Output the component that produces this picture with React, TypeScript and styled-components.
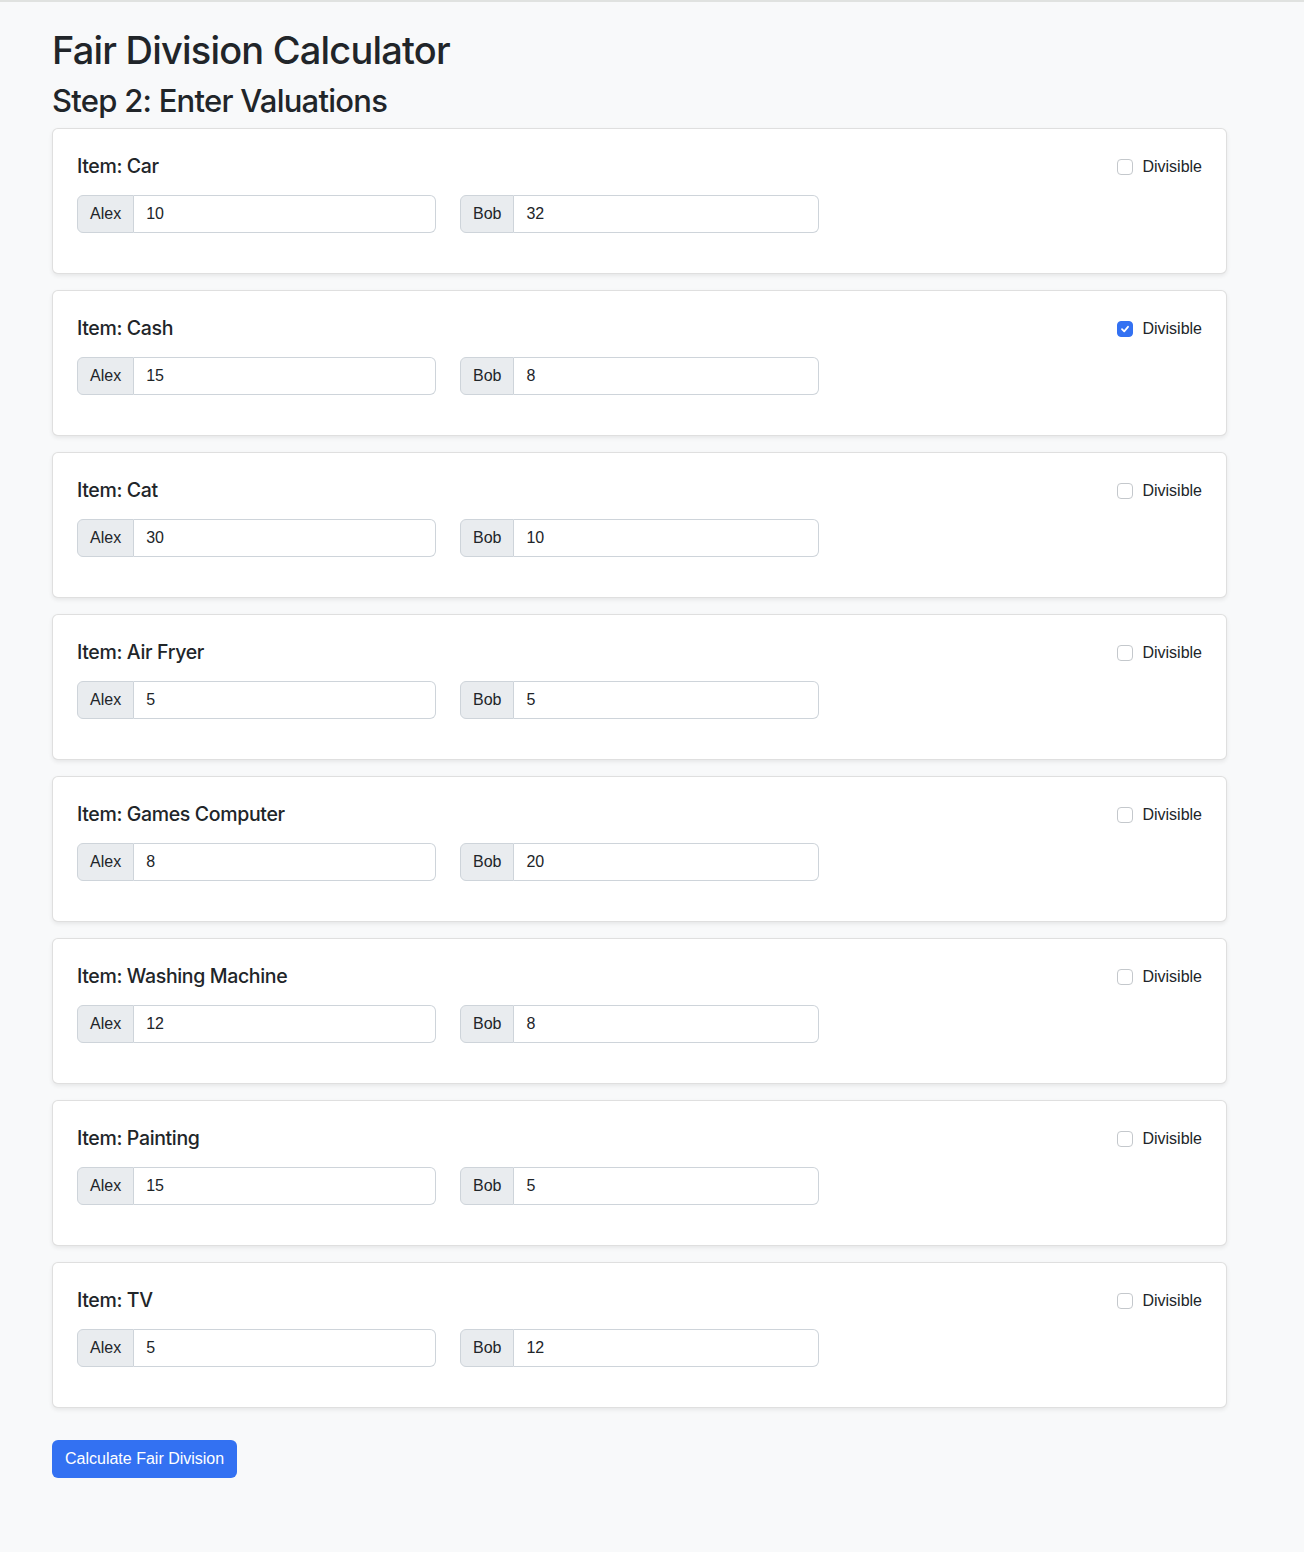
import * as React from 'react';
import { useState } from 'react';
import styled, { createGlobalStyle } from 'styled-components';

const GlobalStyle = createGlobalStyle`
  * { box-sizing: border-box; }
  body {
    margin: 0;
    background: #f8f9fa;
    color: #212529;
    font-family: "Liberation Sans", Arial, sans-serif;
    font-size: 16px;
    line-height: 1.5;
  }
`;

const headingFont = `Inter, "Liberation Sans", Arial, sans-serif`;

const Page = styled.div`
  border-top: 2px solid #e0e2e0;
  min-height: 1552px;
  padding: 26px 77px 60px 52px;
`;

const Title = styled.h1`
  font-family: ${headingFont};
  font-size: 38px;
  font-weight: 500;
  line-height: 1.2;
  letter-spacing: -0.8px;
  margin: 0 0 8px;
`;

const Subtitle = styled.h2`
  font-family: ${headingFont};
  font-size: 31px;
  font-weight: 500;
  line-height: 1.2;
  letter-spacing: -0.75px;
  margin: 0 0 9px;
`;

const Card = styled.div`
  background: #fff;
  border: 1px solid rgba(0, 0, 0, 0.125);
  border-radius: 6px;
  box-shadow: 0 2px 4px rgba(0, 0, 0, 0.075);
  padding: 26px 24px 24px;
  margin-bottom: 16px;
`;

const CardHeader = styled.div`
  display: flex;
  justify-content: space-between;
  align-items: center;
  margin-bottom: 16px;
`;

const ItemTitle = styled.h5`
  font-family: ${headingFont};
  font-size: 19.5px;
  font-weight: 500;
  line-height: 1.2;
  letter-spacing: -0.35px;
  margin: 0;
`;

const CheckLabel = styled.label`
  display: flex;
  align-items: center;
  gap: 9px;
  font-size: 16px;
  line-height: 24px;
  cursor: pointer;
`;

const CheckBox = styled.span<{ $checked: boolean }>`
  width: 16px;
  height: 16px;
  border-radius: 4px;
  border: 1px solid ${(p) => (p.$checked ? '#3371f2' : '#c4c8cc')};
  background: ${(p) => (p.$checked ? '#3371f2' : '#fff')};
  display: flex;
  align-items: center;
  justify-content: center;
`;

const Row = styled.div`
  display: grid;
  grid-template-columns: repeat(3, 1fr);
  column-gap: 24px;
  margin-bottom: 16px;
`;

const InputGroup = styled.div`
  display: flex;
  height: 38px;
`;

const Addon = styled.span`
  display: flex;
  align-items: center;
  padding: 0 12px;
  background: #e9ecef;
  border: 1px solid #ced4da;
  border-radius: 6px 0 0 6px;
  font-size: 16px;
  color: #212529;
`;

const Input = styled.input`
  flex: 1;
  min-width: 0;
  border: 1px solid #ced4da;
  border-left: none;
  border-radius: 0 6px 6px 0;
  padding: 0 12px;
  font-family: inherit;
  font-size: 16px;
  color: #212529;
  background: #fff;
  outline: none;
`;

const Button = styled.button`
  margin-top: 16px;
  background: #3371f2;
  color: #fff;
  border: none;
  border-radius: 6px;
  height: 38px;
  padding: 0 13px;
  font-family: inherit;
  font-size: 16px;
  cursor: pointer;
`;

const items = [
  { name: 'Car', alex: '10', bob: '32', divisible: false },
  { name: 'Cash', alex: '15', bob: '8', divisible: true },
  { name: 'Cat', alex: '30', bob: '10', divisible: false },
  { name: 'Air Fryer', alex: '5', bob: '5', divisible: false },
  { name: 'Games Computer', alex: '8', bob: '20', divisible: false },
  { name: 'Washing Machine', alex: '12', bob: '8', divisible: false },
  { name: 'Painting', alex: '15', bob: '5', divisible: false },
  { name: 'TV', alex: '5', bob: '12', divisible: false },
];

function ItemCard({ item }: { item: (typeof items)[number] }) {
  const [checked, setChecked] = useState(item.divisible);
  return (
    <Card>
      <CardHeader>
        <ItemTitle>Item: {item.name}</ItemTitle>
        <CheckLabel onClick={() => setChecked((c) => !c)}>
          <CheckBox $checked={checked}>
            {checked && (
              <svg width="10" height="10" viewBox="0 0 10 10">
                <path d="M2 5.2 L4.2 7.3 L8 2.8" fill="none" stroke="#fff" strokeWidth="1.8" strokeLinecap="round" strokeLinejoin="round" />
              </svg>
            )}
          </CheckBox>
          Divisible
        </CheckLabel>
      </CardHeader>
      <Row>
        <InputGroup>
          <Addon>Alex</Addon>
          <Input defaultValue={item.alex} />
        </InputGroup>
        <InputGroup>
          <Addon>Bob</Addon>
          <Input defaultValue={item.bob} />
        </InputGroup>
      </Row>
    </Card>
  );
}

export default function App() {
  return (
    <Page>
      <GlobalStyle />
      <Title>Fair Division Calculator</Title>
      <Subtitle>Step 2: Enter Valuations</Subtitle>
      {items.map((item) => (
        <ItemCard key={item.name} item={item} />
      ))}
      <Button>Calculate Fair Division</Button>
    </Page>
  );
}
